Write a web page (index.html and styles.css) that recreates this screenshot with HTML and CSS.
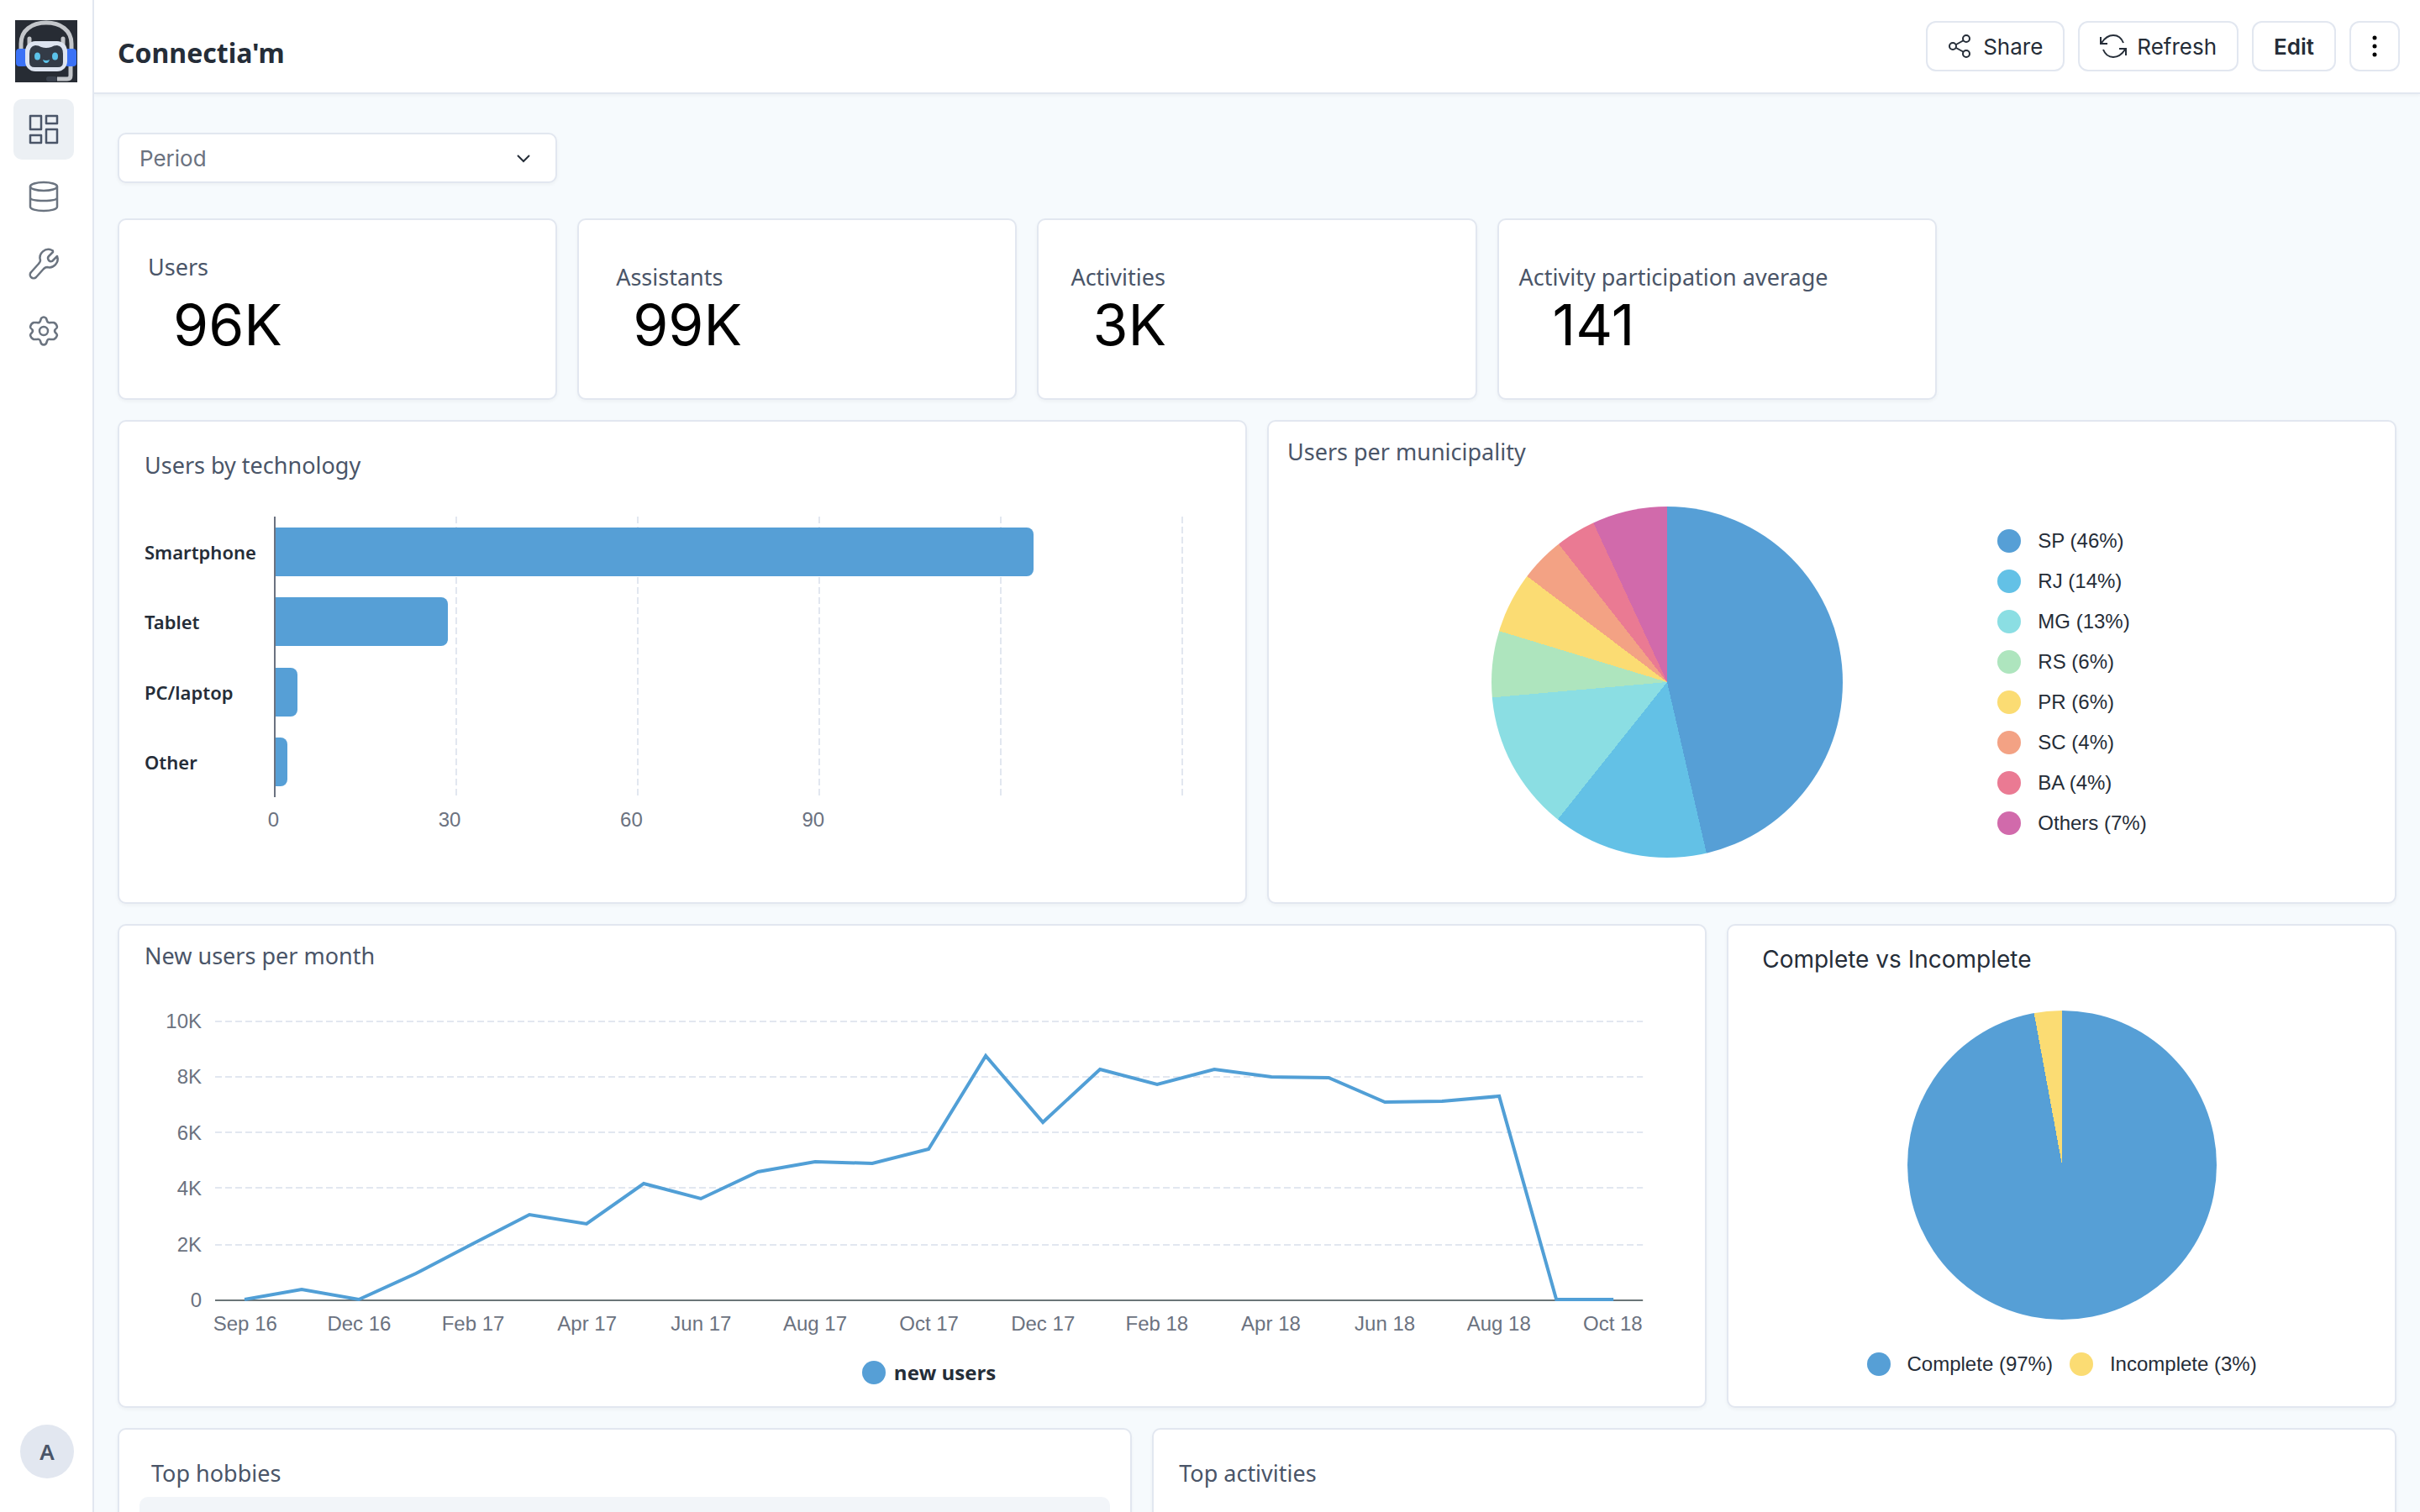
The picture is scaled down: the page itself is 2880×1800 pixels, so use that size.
FILE: index.html
```html
<!DOCTYPE html>
<html lang="en">
<head>
    <meta charset="UTF-8">
    <meta name="viewport" content="width=device-width, initial-scale=1.0">
    <title>Connectia'm</title>
    <link rel="stylesheet" href="styles.css">
</head>
<body>
    <aside class="sidebar">
        <a class="logo" href="#" aria-label="Home">
            <svg viewBox="0 0 74 74" width="74" height="74">
                <rect width="74" height="74" fill="#272c34"/>
                <path d="M7 38V28C7 12 20 3 37 3s30 9 30 25v10" fill="none" stroke="#c3c6ca" stroke-width="5"/>
                <path d="M66 52v14q0 4-4 4H50" fill="none" stroke="#c3c6ca" stroke-width="5"/>
                <path d="M17 30v-8M57 30v-8" stroke="#c3c6ca" stroke-width="5" stroke-linecap="round"/>
                <rect x="37" y="67" width="13" height="6" rx="3" fill="#3b424e"/>
                <rect x="1" y="34" width="14" height="21" rx="4" fill="#3b72f6"/>
                <rect x="59" y="34" width="14" height="21" rx="4" fill="#3b72f6"/>
                <rect x="12" y="25" width="50" height="36" rx="12" fill="#dde4f0"/>
                <path d="M24 30q4 0 7 2 6 2 12 0 3-2 7-2 7 1 7 10v10q0 6-6 6H23q-6 0-6-6V40q0-9 7-10z" fill="#333b47"/>
                <ellipse cx="26.500" cy="43" rx="3.500" ry="4.500" fill="#5cc3ea"/>
                <ellipse cx="47.500" cy="43" rx="3.500" ry="4.500" fill="#5cc3ea"/>
                <path d="M33 47q4 2 8 0-1 4-4 4t-4-4z" fill="#5cc3ea"/>
            </svg>
        </a>
        <nav class="nav">
            <a class="nav-item active" href="#" aria-label="Dashboards">
                <svg class="icon" viewBox="0 0 36 36">
                    <rect x="2" y="2" width="13" height="16"/>
                    <rect x="21" y="2" width="13" height="9"/>
                    <rect x="2" y="25" width="13" height="9"/>
                    <rect x="21" y="18" width="13" height="16"/>
                </svg>
            </a>
            <a class="nav-item" href="#" aria-label="Data">
                <svg class="icon" viewBox="0 0 36 36">
                    <ellipse cx="18" cy="6" rx="16" ry="5"/>
                    <path d="M2 6v24c0 3 7 5 16 5s16-2 16-5V6M2 19c0 3 7 4 16 4s16-1 16-4"/>
                </svg>
            </a>
            <a class="nav-item" href="#" aria-label="Tools">
                <svg class="icon" viewBox="0 0 36 36">
                    <path d="M28 2a10 10 0 0 0-14 12q0 2-2 4L3 28a4 4 0 0 0 6 6l9-10q2-2 4-2a10 10 0 0 0 12-13l-6 6q-2 1-4-1-2-3 0-5l5-5q0-2-1-2z"/>
                </svg>
            </a>
            <a class="nav-item" href="#" aria-label="Settings">
                <svg class="icon" viewBox="0 0 36 36">
                    <circle cx="18" cy="18" r="5"/>
                    <path d="M15 3q3-3 6 0l1 3q1 3 4 2l4 0q3 1 4 5 0 2-2 3-2 2 0 4 2 2 2 3-1 4-4 5l-4 0q-3-1-4 2l-1 3q-3 3-6 0l-1-3q-1-3-4-2l-4 0q-3-1-4-5 0-1 2-3 2-2 0-4-2-1-2-3 1-4 4-5l4 0q3 1 4-2z"/>
                </svg>
            </a>
        </nav>
        <button class="avatar" type="button">A</button>
    </aside>

    <div class="main">
        <header class="header">
            <h1>Connectia'm</h1>
            <div class="actions">
                <button class="btn" type="button">
                    <svg class="icon-share" viewBox="0 0 28 30">
                        <circle cx="6" cy="15" r="4"/>
                        <circle cx="22" cy="6" r="4"/>
                        <circle cx="22" cy="24" r="4"/>
                        <path d="M10 13l9-5M10 17l9 5"/>
                    </svg>
                    Share
                </button>
                <button class="btn" type="button">
                    <svg class="icon-refresh" viewBox="0 0 32 28">
                        <path d="M1 3v8h8M2 10C6 4 10 1 16 1c6 0 10 4 12 9M31 25v-8h-8M30 18c-4 6-8 9-14 9-6 0-10-4-12-9"/>
                    </svg>
                    Refresh
                </button>
                <button class="btn btn-edit" type="button">Edit</button>
                <button class="btn btn-more" type="button" aria-label="More">
                    <svg viewBox="0 0 6 28" width="6" height="28">
                        <circle cx="3" cy="4" r="2.500"/>
                        <circle cx="3" cy="14" r="2.500"/>
                        <circle cx="3" cy="24" r="2.500"/>
                    </svg>
                </button>
            </div>
        </header>

        <main class="board">
            <div class="filter">
                <select class="period" id="period" aria-label="Period">
                    <option>Period</option>
                </select>
                <svg class="chevron" viewBox="0 0 16 10"><path d="M1 1l7 7 7-7"/></svg>
            </div>

            <section class="card stat stat-high indent-34">
                <h2>Users</h2>
                <p class="value">96K</p>
            </section>
            <section class="card stat indent-44">
                <h2>Assistants</h2>
                <p class="value">99K</p>
            </section>
            <section class="card stat indent-38">
                <h2>Activities</h2>
                <p class="value">3K</p>
            </section>
            <section class="card stat indent-24">
                <h2>Activity participation average</h2>
                <p class="value">141</p>
            </section>

            <section class="card tech">
                <h2>Users by technology</h2>
                <div class="bar-chart">
                    <ul class="bar-labels">
                        <li>Smartphone</li>
                        <li>Tablet</li>
                        <li>PC/laptop</li>
                        <li>Other</li>
                    </ul>
                    <div class="bar-plot">
                        <div class="bar" style="width: 83.5%"></div>
                        <div class="bar" style="width: 19%"></div>
                        <div class="bar" style="width: 2.4%"></div>
                        <div class="bar" style="width: 1.3%"></div>
                    </div>
                </div>
                <div class="bar-ticks">
                    <span>0</span>
                    <span>30</span>
                    <span>60</span>
                    <span>90</span>
                </div>
            </section>

            <section class="card municipality">
                <h2>Users per municipality</h2>
                <div class="pie-row">
                    <div class="pie pie-municipality"></div>
                    <ul class="legend">
                        <li><span class="dot blue"></span>SP (46%)</li>
                        <li><span class="dot sky"></span>RJ (14%)</li>
                        <li><span class="dot teal"></span>MG (13%)</li>
                        <li><span class="dot green"></span>RS (6%)</li>
                        <li><span class="dot yellow"></span>PR (6%)</li>
                        <li><span class="dot orange"></span>SC (4%)</li>
                        <li><span class="dot red"></span>BA (4%)</li>
                        <li><span class="dot pink"></span>Others (7%)</li>
                    </ul>
                </div>
            </section>

            <section class="card monthly">
                <h2>New users per month</h2>
                <div class="line-chart">
                    <div class="y-axis">
                        <span>10K</span>
                        <span>8K</span>
                        <span>6K</span>
                        <span>4K</span>
                        <span>2K</span>
                        <span>0</span>
                    </div>
                    <svg class="line-plot" viewBox="0 0 1699 332" preserveAspectRatio="none">
                        <path class="grid-line" d="M0 0H1699M0 66H1699M0 132H1699M0 198H1699M0 266H1699"/>
                        <path class="axis-line" d="M0 332H1699"/>
                        <polyline class="series" points="35,331 103,319 171,331 239,300 306,265 374,230 442,241 510,193 578,211 646,179 714,167 782,169 849,152 917,41 985,120 1053,57 1121,75 1189,57 1257,66 1325,67 1392,96 1460,95 1528,89 1596,331 1664,331"/>
                    </svg>
                    <div class="x-axis">
                        <span>Sep 16</span>
                        <span>Dec 16</span>
                        <span>Feb 17</span>
                        <span>Apr 17</span>
                        <span>Jun 17</span>
                        <span>Aug 17</span>
                        <span>Oct 17</span>
                        <span>Dec 17</span>
                        <span>Feb 18</span>
                        <span>Apr 18</span>
                        <span>Jun 18</span>
                        <span>Aug 18</span>
                        <span>Oct 18</span>
                    </div>
                    <div class="series-legend"><span class="dot blue"></span>new users</div>
                </div>
            </section>

            <section class="card completion">
                <h2>Complete vs Incomplete</h2>
                <div class="pie pie-completion"></div>
                <ul class="legend legend-inline">
                    <li><span class="dot blue"></span>Complete (97%)</li>
                    <li><span class="dot yellow"></span>Incomplete (3%)</li>
                </ul>
            </section>

            <section class="card hobbies">
                <h2>Top hobbies</h2>
                <div class="panel"></div>
            </section>
            <section class="card activities">
                <h2>Top activities</h2>
            </section>
        </main>
    </div>
</body>
</html>
```
FILE: styles.css
```css
* {
    box-sizing: border-box;
}
body {
    display: flex;
    height: 100vh;
    margin: 0;
    background: #f6fafd;
    color: #252d38;
    font-family: "Noto Sans", sans-serif;
    overflow: hidden;
}
h1, h2, p, ul {
    margin: 0;
    padding: 0;
    font-weight: 500;
}
ul {
    list-style: none;
}
button, select {
    font-family: Inter, sans-serif;
    font-size: 26px;
    color: #252d38;
    cursor: pointer;
}

/* Sidebar */
.sidebar {
    flex: none;
    display: flex;
    flex-direction: column;
    width: 112px;
    padding: 24px 0 40px 16px;
    background: #fff;
    border-right: 2px solid #e2e7f0;
}
.logo {
    margin-left: 2px;
    height: 74px;
}
.logo svg {
    display: block;
}
.nav {
    display: flex;
    flex-direction: column;
    gap: 8px;
    margin-top: 20px;
}
.nav-item {
    display: flex;
    align-items: center;
    justify-content: center;
    width: 72px;
    height: 72px;
    border-radius: 10px;
    color: #6b7480;
}
.nav-item.active {
    background: #ecf0f4;
    color: #4a5568;
}
.icon {
    width: 36px;
    height: 36px;
    overflow: visible;
    fill: none;
    stroke: currentColor;
    stroke-width: 2.5;
    stroke-linejoin: round;
}
.avatar {
    width: 64px;
    height: 64px;
    margin: auto 0 0 8px;
    border: none;
    border-radius: 50%;
    background: #e2e7f0;
    color: #4a5568;
    font-family: "Noto Sans", sans-serif;
    font-weight: 600;
}

/* Header */
.main {
    flex: 1;
    min-width: 0;
    overflow-y: auto;
    scrollbar-width: none;
}
.header {
    display: flex;
    align-items: center;
    justify-content: space-between;
    height: 112px;
    padding: 0 24px 0 28px;
    background: #fff;
    border-bottom: 2px solid #e2e7f0;
    box-shadow: 0 2px 4px rgba(0, 0, 0, 0.04);
}
.header h1 {
    padding-top: 14px;
    font-size: 32px;
    font-weight: 700;
}
.actions {
    display: flex;
    gap: 16px;
}
.btn {
    display: flex;
    align-items: center;
    justify-content: center;
    height: 60px;
    padding: 0 24px;
    background: #fff;
    border: 2px solid #e2e7f0;
    border-radius: 12px;
    font-weight: 400;
}
.btn svg {
    overflow: visible;
}
.icon-share, .icon-refresh {
    margin-right: 14px;
    fill: none;
    stroke: #252d38;
    stroke-width: 2;
}
.icon-share {
    width: 28px;
    height: 30px;
}
.icon-refresh {
    width: 32px;
    height: 28px;
    margin-right: 12px;
}
.btn-edit {
    font-weight: 600;
}
.btn-more {
    width: 60px;
    padding: 0;
}

/* Board: 20 columns, rows of 96px */
.board {
    display: grid;
    grid-template-columns: repeat(20, 1fr);
    grid-auto-rows: 96px;
    gap: 24px;
    padding: 28px;
}
.card {
    background: #fff;
    border: 2px solid #e2e7f0;
    border-radius: 10px;
    box-shadow: 0 2px 4px rgba(0, 0, 0, 0.04);
    min-width: 0;
}
.card h2 {
    color: #4a5568;
    font-size: 27px;
    font-weight: 450;
    line-height: 40px;
}
.filter {
    position: relative;
    grid-column: span 4;
    align-self: center;
}
.period {
    display: block;
    width: 100%;
    height: 60px;
    padding: 0 20px 0 24px;
    appearance: none;
    background: #fff;
    border: 2px solid #e2e7f0;
    border-radius: 10px;
    box-shadow: 0 2px 4px rgba(0, 0, 0, 0.04);
    color: #6b7280;
}
.chevron {
    position: absolute;
    right: 32px;
    top: 26px;
    width: 16px;
    height: 10px;
    fill: none;
    stroke: #252d38;
    stroke-width: 2;
    pointer-events: none;
}

/* Stats */
.stat {
    grid-column: span 4;
    grid-row: 2 / span 2;
    padding-top: 48px;
}
.stat-high {
    padding-top: 36px;
}
.stat-high h2 {
    margin-bottom: 12px;
}
.indent-24 h2 { padding-left: 24px; }
.indent-34 h2 { padding-left: 34px; }
.indent-38 h2 { padding-left: 38px; }
.indent-44 h2 { padding-left: 44px; }
.value {
    padding-left: 64px;
    color: #000;
    font-family: Inter, sans-serif;
    font-size: 68px;
    font-weight: 400;
    line-height: 72px;
}

/* Users by technology */
.tech {
    grid-column: span 10;
    grid-row: 4 / span 5;
    padding: 32px 74px 0 30px;
}
.bar-chart {
    display: grid;
    grid-template-columns: 154px 1fr;
    height: 334px;
    margin-top: 41px;
}
.bar-labels {
    display: flex;
    flex-direction: column;
    font-size: 22px;
}
.bar-labels li {
    flex: 1;
    display: flex;
    align-items: center;
    font-weight: 600;
}
.bar-plot {
    display: flex;
    flex-direction: column;
    justify-content: space-around;
    border-left: 2px solid #6b7280;
    background:
        repeating-linear-gradient(to bottom, transparent 0 8px, #fff 8px 12px),
        repeating-linear-gradient(to right, transparent 0 calc(20% - 2px), #e2e7f0 calc(20% - 2px) 20%);
}
.bar {
    height: 58px;
    background: #569fd6;
    border-radius: 0 8px 8px 0;
}
.bar-ticks {
    display: grid;
    grid-template-columns: 154px repeat(5, 1fr);
    margin-top: 11px;
    color: #6b7280;
    font-family: "Liberation Sans", sans-serif;
    font-size: 24px;
    line-height: 32px;
    text-align: right;
}
.bar-ticks span {
    margin-right: -6px;
}

/* Pies */
.municipality {
    grid-column: span 10;
    grid-row: 4 / span 5;
    padding: 16px 22px 0;
}
.pie-row {
    display: flex;
    align-items: center;
    justify-content: center;
    gap: 184px;
    margin: 45px 30px 0 0;
}
.pie {
    border-radius: 50%;
}
.pie-municipality {
    width: 418px;
    height: 418px;
    background: conic-gradient(#569fd6 0 46.4%, #63c1e6 0 60.7%, #8bdee3 0 73.6%, #aee5be 0 79.7%, #fbdc73 0 85.3%, #f3a284 0 89.4%, #ea7a93 0 93.1%, #d16aab 0);
}
.pie-completion {
    width: 368px;
    height: 368px;
    margin: 41px auto 0;
    background: conic-gradient(#569fd6 0 97.1%, #fbdc73 0);
}
.legend {
    font-family: "Liberation Sans", sans-serif;
    font-size: 24px;
    line-height: 48px;
}
.legend li {
    display: flex;
    align-items: center;
    gap: 20px;
    font-weight: 400;
}
.legend-inline {
    display: flex;
    justify-content: center;
    gap: 20px;
    margin-top: 29px;
}
.dot {
    width: 28px;
    height: 28px;
    border-radius: 50%;
}
.blue { background: #569fd6; }
.sky { background: #63c1e6; }
.teal { background: #8bdee3; }
.green { background: #aee5be; }
.yellow { background: #fbdc73; }
.orange { background: #f3a284; }
.red { background: #ea7a93; }
.pink { background: #d16aab; }

/* New users per month */
.monthly {
    grid-column: span 14;
    grid-row: 9 / span 5;
    padding: 16px 74px 0 30px;
}
.line-chart {
    display: grid;
    grid-template-columns: 68px 1fr;
    column-gap: 16px;
    margin-top: 58px;
    color: #6b7280;
    font-family: "Liberation Sans", sans-serif;
    font-size: 24px;
}
.y-axis {
    display: flex;
    flex-direction: column;
    justify-content: space-between;
    height: 356px;
    margin: -12px 0;
    line-height: 24px;
    text-align: right;
}
.line-plot {
    display: block;
    width: 100%;
    height: 332px;
    overflow: visible;
}
.line-plot * {
    fill: none;
    vector-effect: non-scaling-stroke;
}
.grid-line {
    stroke: #e2e7f0;
    stroke-width: 2;
    stroke-dasharray: 8 4;
}
.axis-line {
    stroke: #6b7578;
    stroke-width: 2;
}
.series {
    stroke: #519fd6;
    stroke-width: 4;
}
.x-axis {
    grid-column: 2;
    display: grid;
    grid-template-columns: repeat(13, 1fr);
    margin: 12px -32px 0;
    line-height: 32px;
    text-align: center;
}
.series-legend {
    grid-column: 2;
    display: flex;
    align-items: center;
    justify-content: center;
    gap: 10px;
    margin-top: 24px;
    color: #252d38;
    font-family: "Open Sans", sans-serif;
    font-weight: 700;
    line-height: 36px;
}

.completion {
    grid-column: span 6;
    grid-row: 9 / span 5;
    padding-top: 20px;
}
.completion h2 {
    padding-left: 40px;
    color: #252d38;
    font-family: Inter, sans-serif;
    font-size: 28px;
    font-weight: 400;
}

/* Bottom row */
.hobbies {
    grid-column: span 9;
    grid-row: 14 / span 5;
    padding: 32px 24px 24px;
}
.hobbies h2 {
    padding-left: 14px;
}
.panel {
    height: 440px;
    margin-top: 8px;
    border-radius: 10px;
    background: #f2f5f9;
}
.activities {
    grid-column: span 11;
    grid-row: 14 / span 5;
    padding: 32px 30px 0;
}
```
